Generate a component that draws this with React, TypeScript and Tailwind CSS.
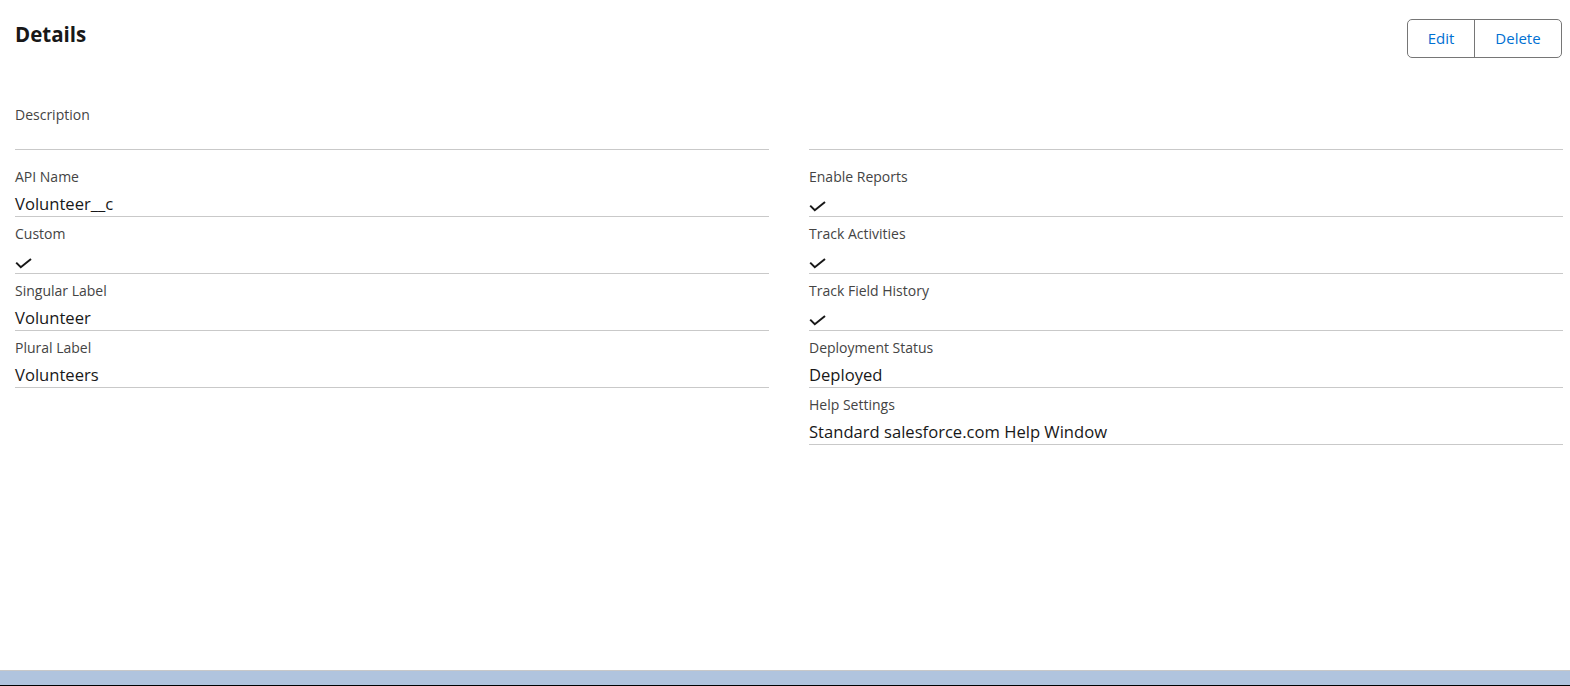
import React from "react";

type Field = { label: string; value?: string; check?: boolean };

const leftFields: Field[] = [
  { label: "API Name", value: "Volunteer__c" },
  { label: "Custom", check: true },
  { label: "Singular Label", value: "Volunteer" },
  { label: "Plural Label", value: "Volunteers" },
];

const rightFields: Field[] = [
  { label: "Enable Reports", check: true },
  { label: "Track Activities", check: true },
  { label: "Track Field History", check: true },
  { label: "Deployment Status", value: "Deployed" },
  { label: "Help Settings", value: "Standard salesforce.com Help Window" },
];

function Check() {
  return (
    <svg width="17" height="11" viewBox="0 0 17 11" className="mt-[11px]">
      <polyline points="1.2,4.6 5.8,9.2 16,1" fill="none" stroke="#181818" strokeWidth="2" />
    </svg>
  );
}

function FieldRow({ field }: { field: Field }) {
  return (
    <div className="flex flex-col border-b border-[#c9c9c9] pt-[7px]">
      <div className="text-[14px] leading-[19px] text-[#444444]">{field.label}</div>
      <div className="mt-[4px] h-[26px] text-[16.6px] leading-[28px] text-[#181818]">
        {field.check ? <Check /> : field.value}
      </div>
    </div>
  );
}

export default function App() {
  return (
    <div className="flex h-screen flex-col bg-white font-['Open_Sans','Noto_Sans',sans-serif]">
      <div className="flex-1 pl-[15px] pr-[7px]">
        <div className="flex items-start justify-between pt-[19px]">
          <h1 className="pt-[1px] text-[20.5px] font-bold leading-[28px] text-[#181818]">Details</h1>
          <div className="mr-[1px] flex h-[39px] rounded-[5px] border border-[#767676] text-[15px] text-[#0070d2]">
            <button className="w-[67px] border-r border-[#767676]">Edit</button>
            <button className="w-[86px]">Delete</button>
          </div>
        </div>

        <div className="mt-[40px] grid grid-cols-2 gap-x-[40px]">
          <div className="flex flex-col border-b border-[#c9c9c9] pt-[7px]">
            <div className="text-[14px] leading-[19px] text-[#444444]">Description</div>
            <div className="h-[25px]" />
          </div>
          <div className="border-b border-[#c9c9c9]" />
        </div>

        <div className="mt-[10px] grid grid-cols-2 items-start gap-x-[40px]">
          <div className="flex flex-col">
            {leftFields.map((f) => (
              <FieldRow key={f.label} field={f} />
            ))}
          </div>
          <div className="flex flex-col">
            {rightFields.map((f) => (
              <FieldRow key={f.label} field={f} />
            ))}
          </div>
        </div>
      </div>
      <div className="h-[16px] border-t border-b border-t-[#c8c8c8] border-b-black bg-[#b0c4de]" />
    </div>
  );
}
